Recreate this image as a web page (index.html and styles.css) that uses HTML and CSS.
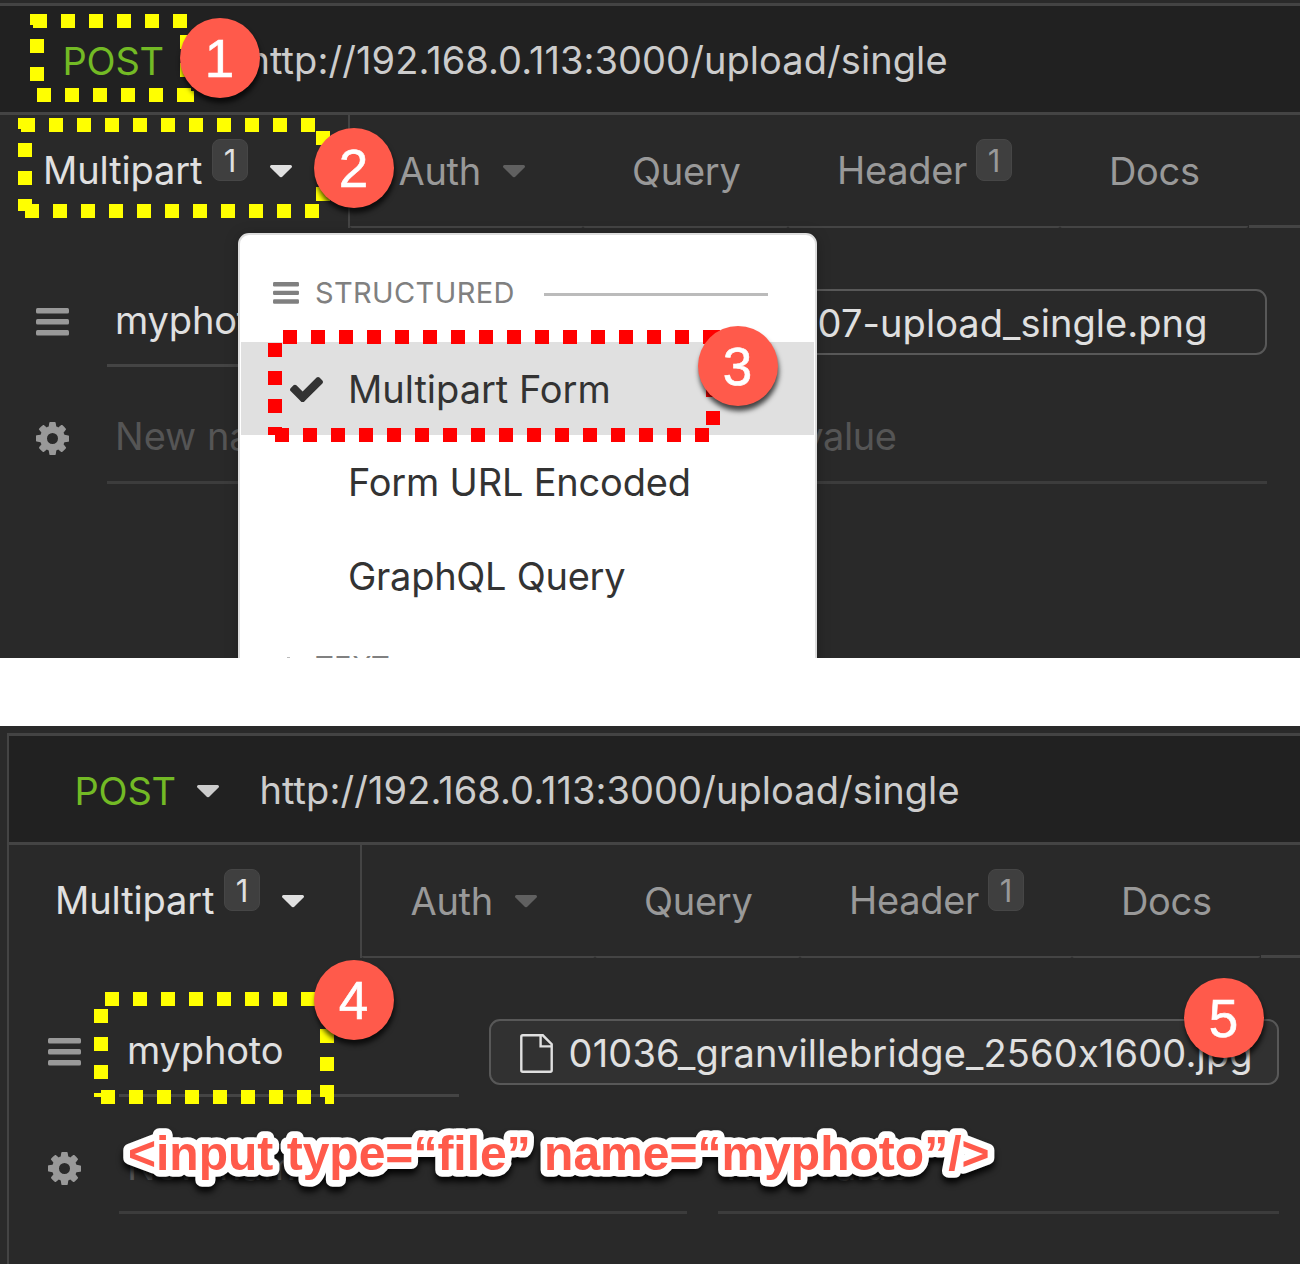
FILE: index.html
```html
<!DOCTYPE html>
<html lang="en">
<head>
<meta charset="utf-8">
<title>Multipart upload</title>
<link rel="stylesheet" href="styles.css">
</head>
<body>
<svg class="defs" aria-hidden="true">
  <symbol id="caret" viewBox="384 640 1024 576"><path d="M1408 704q0 26-19 45l-448 448q-19 19-45 19t-45-19l-448-448q-19-19-19-45t19-45 45-19h896q26 0 45 19t19 45z"/></symbol>
  <symbol id="bars" viewBox="0 0 33 28"><rect width="33" height="5.600" rx="1.500"/><rect y="11" width="33" height="5.600" rx="1.500"/><rect y="22" width="33" height="5.600" rx="1.500"/></symbol>
  <symbol id="check" viewBox="121 334 1550 1188"><path d="M1671 566q0 40-28 68l-724 724-136 136q-28 28-68 28t-68-28l-136-136-362-362q-28-28-28-68t28-68l136-136q28-28 68-28t68 28l294 295 656-657q28-28 68-28t68 28l136 136q28 28 28 68z"/></symbol>
  <symbol id="cog" viewBox="128 128 1536 1536"><path d="M1152 896q0-106-75-181t-181-75-181 75-75 181 75 181 181 75 181-75 75-181zm512-109v222q0 12-8 23t-20 13l-185 28q-19 54-39 91 35 50 107 138 10 12 10 25t-9 23q-27 37-99 108t-94 71q-12 0-26-9l-138-108q-44 23-91 38-16 136-29 186-7 28-36 28h-222q-14 0-24.500-8.500t-11.500-21.500l-28-184q-49-16-90-37l-141 107q-10 9-25 9-14 0-25-11-126-114-165-168-7-10-7-23 0-12 8-23 15-21 51-66.500t54-70.500q-27-50-41-99l-183-27q-13-2-21-12.500t-8-23.500v-222q0-12 8-23t19-13l186-28q14-46 39-92-40-57-107-138-10-12-10-24 0-10 9-23 26-36 98.500-107.500t94.500-71.500q13 0 26 10l138 107q44-23 91-38 16-136 29-186 7-28 36-28h222q14 0 24.500 8.500t11.500 21.500l28 184q49 16 90 37l142-107q9-9 24-9 13 0 25 10 129 119 165 170 7 8 7 22 0 12-8 23-15 21-51 66.500t-54 70.500q26 50 41 98l183 28q13 2 21 12.500t8 23.500z"/></symbol>
  <symbol id="file" viewBox="0 0 33 39"><path d="M2.800 1.300H22.800L31.700 10.200V36.200Q31.700 37.700 30.200 37.700H2.800Q1.300 37.700 1.300 36.200V2.800Q1.300 1.300 2.800 1.300ZM20.600 1.800V12.400H31.400" fill="none" stroke="currentColor" stroke-width="2.400"/></symbol>
</svg>

<section class="shot shot-top">
  <div class="pane">
    <div class="urlbar">
      <span class="method">POST</span>
      <svg class="caret"><use href="#caret"/></svg>
      <span class="url">http://192.168.0.113:3000/upload/single</span>
    </div>
    <nav class="tabs">
      <div class="tab tab-body active"><span class="label raised">Multipart</span><span class="count">1</span><svg class="caret"><use href="#caret"/></svg></div>
      <div class="tab tab-auth"><span class="label">Auth</span><svg class="caret"><use href="#caret"/></svg></div>
      <div class="tab tab-query"><span class="label">Query</span></div>
      <div class="tab tab-header"><span class="label raised">Header</span><span class="count">1</span></div>
      <div class="tab tab-docs"><span class="label">Docs</span></div>
      <div class="tab-fill"></div>
    </nav>
    <div class="rows">
      <div class="row">
        <svg class="bars"><use href="#bars"/></svg>
        <div class="input name filled">myphoto</div>
        <div class="file-btn align-end"><span>07-upload_single.png</span></div>
      </div>
      <div class="row row-new">
        <svg class="cog"><use href="#cog"/></svg>
        <div class="input name">New name</div>
        <div class="input value">New value</div>
      </div>
    </div>
  </div>

  <div class="menu">
    <div class="menu-head"><svg class="menu-bars"><use href="#bars"/></svg><span>STRUCTURED</span><i class="rule"></i></div>
    <div class="menu-item selected"><svg class="check"><use href="#check"/></svg><span>Multipart Form</span></div>
    <div class="menu-item form-url"><span>Form URL Encoded</span></div>
    <div class="menu-item graphql"><span>GraphQL Query</span></div>
    <div class="menu-head menu-text"><i class="cursor-icon"></i><span>TEXT</span></div>
  </div>
</section>

<section class="shot shot-bottom">
  <div class="pane">
    <div class="urlbar">
      <span class="method">POST</span>
      <svg class="caret"><use href="#caret"/></svg>
      <span class="url">http://192.168.0.113:3000/upload/single</span>
    </div>
    <nav class="tabs">
      <div class="tab tab-body active"><span class="label raised">Multipart</span><span class="count">1</span><svg class="caret"><use href="#caret"/></svg></div>
      <div class="tab tab-auth"><span class="label">Auth</span><svg class="caret"><use href="#caret"/></svg></div>
      <div class="tab tab-query"><span class="label">Query</span></div>
      <div class="tab tab-header"><span class="label raised">Header</span><span class="count">1</span></div>
      <div class="tab tab-docs"><span class="label">Docs</span></div>
      <div class="tab-fill"></div>
    </nav>
    <div class="rows">
      <div class="row">
        <svg class="bars"><use href="#bars"/></svg>
        <div class="input name filled">myphoto</div>
        <div class="file-btn hover"><svg class="file"><use href="#file"/></svg><span>01036_granvillebridge_2560x1600.jpg</span></div>
      </div>
      <div class="row row-new">
        <svg class="cog"><use href="#cog"/></svg>
        <div class="input name">New name</div>
        <div class="input value">New value</div>
      </div>
    </div>
  </div>
</section>

<svg class="marks" viewBox="0 0 1300 1264">
  <g class="dash yellow">
    <path d="M33 21H187M37 14V25M37 39V81M37 95H191M187 35V77M187 91V102"/>
    <path d="M21 125H315M25 118V129M25 143V211M25 211H319M323 131V201"/>
    <path d="M105 999H320M101 1009V1097M101 1097H334M327 1029V1097"/>
  </g>
  <g class="dash red">
    <path d="M283 337H717M713 330V341M713 355V425M275 343V435M275 435H709"/>
  </g>
  <text class="note" x="128" y="1170">&lt;input type=“file” name=“myphoto”/&gt;</text>
</svg>

<div class="callout c1">1</div>
<div class="callout c2">2</div>
<div class="callout c3">3</div>
<div class="callout c4">4</div>
<div class="callout c5">5</div>
</body>
</html>
```
FILE: styles.css
```css
* { box-sizing: border-box; }

body {
  position: relative;
  margin: 0;
  width: 1300px;
  height: 1264px;
  overflow: hidden;
  background: #fff;
  font: 38px/46px Inter, "Liberation Sans", sans-serif;
  white-space: nowrap;
}

svg { display: block; flex: none; fill: currentColor; }
.defs { position: absolute; width: 0; height: 0; }

/* Screens */
.shot {
  position: relative;
  overflow: hidden;
  background: #2a2a2a;
}
.shot-top { height: 658px; padding-top: 3px; }
.shot-bottom { height: 538px; margin-top: 68px; padding: 7px 0 0 7px; }
.shot-top .pane { margin-left: -5px; }

.pane {
  width: 1310px;
  height: 700px;
  border-top: 3px solid #444;
  border-left: 2px solid #444;
  background: #292929;
}

/* Address bar */
.urlbar {
  display: flex;
  align-items: flex-start;
  height: 109px;
  padding: 32px 0 0 65.500px;
  border-bottom: 3px solid #444;
  background: #212121;
  color: #ccc;
}
.method { width: 122.500px; color: #73ba25; letter-spacing: -0.2px; }
.urlbar .caret { margin-top: 17px; }
.url { margin: -1px 0 0 40.500px; letter-spacing: 0.07px; }
.caret { width: 22px; height: 12.500px; }

/* Tabs */
.tabs { display: flex; height: 113px; color: #999; }
.tab {
  display: flex;
  align-items: flex-start;
  padding-top: 33px;
  border-bottom: 2px solid #444;
  border-radius: 0 0 2px 2px;
}
.tab .raised { margin-top: -1px; }
.tab .label { letter-spacing: -0.3px; }
.tab.active { width: 353px; padding-left: 46px; border-right: 2px solid #444; border-bottom: 0; border-radius: 0; color: #e0e0e0; }
.tab.active .label { width: 169px; letter-spacing: -0.13px; }
.tab .caret { margin-top: 17px; }
.tab.active .caret { margin-left: 21.500px; }
.tab-auth { width: 233px; padding-left: 48.500px; }
.tab-auth .label { width: 104.500px; }
.tab-auth .caret { color: #606060; }
.tab-query { width: 205px; padding-left: 49px; }
.tab-header { width: 272px; padding-left: 49px; }
.tab-header .label { width: 139px; }
.tab-docs { width: 188px; padding-left: 49px; }
.tab-fill { flex: 1; margin-left: 1px; border-bottom: 3px solid #444; }
.count {
  width: 36px;
  height: 42px;
  margin-top: -9px;
  border: 1px solid #464646;
  border-radius: 8px;
  background: #3f3f3f;
  font-size: 31px;
  line-height: 42px;
  text-align: center;
}

/* Form rows */
.rows { width: 1270px; padding-top: 22px; }
.row { display: flex; height: 117px; padding-left: 39px; color: #999; }
.bars { width: 33px; height: 28px; margin-top: 57.500px; }
.cog { width: 33px; height: 33px; margin-top: 55px; }
.input {
  padding: 46px 0 0 8px;
  border-bottom: 3px solid #444;
  color: #555;
}
.name { width: 340px; margin-left: 38px; }
.filled { padding-top: 47px; color: #e0e0e0; letter-spacing: -0.15px; }
.row-new .name { width: 568px; }
.row-new .input { border-color: #3c3c3c; }
.value { flex: 1; margin-left: 31px; letter-spacing: -0.4px; word-spacing: -2px; }
.file-btn {
  display: flex;
  flex: 1;
  height: 66px;
  margin: 39px 0 0 30px;
  padding: 9px 0 0 29px;
  border: 2px solid #585858;
  border-radius: 11px;
  color: #e0e0e0;
  letter-spacing: 0.065px;
}
.hover { background: #313131; letter-spacing: 0.16px; }
.align-end { justify-content: flex-end; padding-right: 57.500px; }
.file { width: 33px; height: 39px; margin: 4px 15.500px 0 0; }

/* Body type menu */
.menu {
  position: absolute;
  left: 238px;
  top: 233px;
  width: 579px;
  height: 500px;
  border: 2px solid #ddd;
  border-radius: 11px;
  background: #fff;
  color: #333;
  box-shadow: 0 2px 14px rgba(0, 0, 0, 0.25);
}
.menu-head {
  display: flex;
  height: 107px;
  padding: 38px 0 0 32.500px;
  color: #808080;
  font-size: 29px;
  line-height: 40px;
  letter-spacing: 0.37px;
}
.menu-bars { width: 26px; height: 22px; margin: 9px 16.500px 0 0; }
.rule { width: 224px; height: 3px; margin: 20px 0 0 29px; background: #bbb; }
.menu-item { height: 93px; margin: 0 1px; padding: 24px 0 0 107px; }
.selected { display: flex; padding-left: 49px; background: #e0e0e0; letter-spacing: -0.03px; }
.check { width: 33px; height: 25.300px; margin: 10.500px 25px 0 0; }
.form-url { letter-spacing: -0.2px; }
.graphql { height: 94px; padding-top: 25px; letter-spacing: -0.28px; }
.menu-text { padding: 25px 0 0 47px; }
.cursor-icon { width: 3px; height: 2px; margin: 10px 25px 0 0; background: #bbb; }

/* Annotations */
.marks { position: absolute; left: 0; top: 0; width: 1300px; height: 1264px; }
.dash { fill: none; stroke-width: 14; stroke-dasharray: 14; }
.yellow { stroke: #ff0; }
.red { stroke: #f00; }
.note {
  font: bold 48px "Liberation Sans", Arial, sans-serif;
  fill: #ff5a4b;
  stroke: #fff;
  stroke-width: 13.500px;
  stroke-linejoin: round;
  paint-order: stroke;
  filter: drop-shadow(0 5px 3px rgba(0, 0, 0, 0.9));
}
.callout {
  position: absolute;
  width: 80px;
  height: 80px;
  padding: 1px 1px 0 0;
  border-radius: 50%;
  background: #ff5a4b;
  color: #fff;
  font: 53px/80px "Liberation Sans", Arial, sans-serif;
  -webkit-text-stroke: 0.6px #fff;
  text-align: center;
  box-shadow: 1px 5px 5px rgba(0, 0, 0, 0.7);
}
.c1 { left: 180px; top: 18px; }
.c2 { left: 314px; top: 128px; }
.c3 { left: 698px; top: 326px; }
.c4 { left: 314px; top: 960px; }
.c5 { left: 1184px; top: 978px; }
```
